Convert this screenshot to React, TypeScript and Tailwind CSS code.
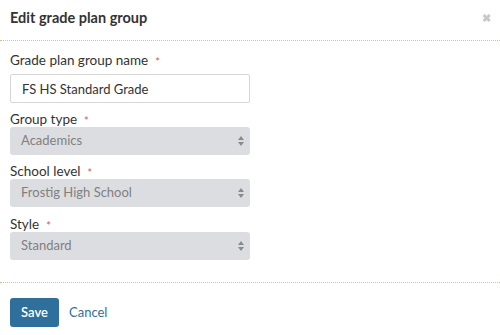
function Label({ text }: { text: string }) {
  return (
    <label className="flex items-center h-[14px] text-[13.5px] text-[#333] leading-none">
      {text}
      <span className="ml-[7px] text-[#e05555] text-[11px]">*</span>
    </label>
  );
}

function FakeSelect({ value }: { value: string }) {
  return (
    <div className="w-[240px] h-[28px] rounded-[3px] bg-[#dcdde0] flex items-center justify-between pl-[11px] pr-[6px] text-[13px] text-[#808080]">
      <span>{value}</span>
      <svg width="6" height="10" viewBox="0 0 6 10" className="fill-[#8a8a8a]">
        <path d="M3 0 L6 4 L0 4 Z" />
        <path d="M3 10 L6 6 L0 6 Z" />
      </svg>
    </div>
  );
}

export default function App() {
  return (
    <div className="w-[500px] h-[335px] bg-white font-['Lato',sans-serif] text-[#333] overflow-hidden">
      <header className="h-[41px] pl-[10px] pr-[9px] flex items-center justify-between border-b border-dotted border-[#efb58f]">
        <h1 className="text-[14.5px] font-bold text-[#333] mt-[-5px]">Edit grade plan group</h1>
        <span className="text-[#c8c8c8] text-[11px] font-bold mt-[-4px]">✖</span>
      </header>

      <div className="px-[10px] pt-[13px] pb-[22px] border-b border-dotted border-[#efb58f]">
        <Label text="Grade plan group name" />
        <input
          className="mt-[6px] w-[240px] h-[29px] border border-[#d6d6d6] rounded-[2px] px-[11px] text-[13px] text-[#333] outline-none"
          defaultValue="FS HS Standard Grade"
        />

        <div className="mt-[10px] flex flex-col">
          <Label text="Group type" />
          <FakeSelect value="Academics" />
        </div>

        <div className="mt-[10px] flex flex-col">
          <Label text="School level" />
          <FakeSelect value="Frostig High School" />
        </div>

        <div className="mt-[11px] flex flex-col">
          <Label text="Style" />
          <FakeSelect value="Standard" />
        </div>
      </div>

      <footer className="px-[10px] pt-[15px] flex items-center gap-[10px]">
        <button className="w-[49px] h-[29px] rounded-[3px] bg-[#2f6f9b] text-white text-[13px] font-semibold">
          Save
        </button>
        <button className="text-[13px] text-[#2f6f9b]">Cancel</button>
      </footer>
    </div>
  );
}
